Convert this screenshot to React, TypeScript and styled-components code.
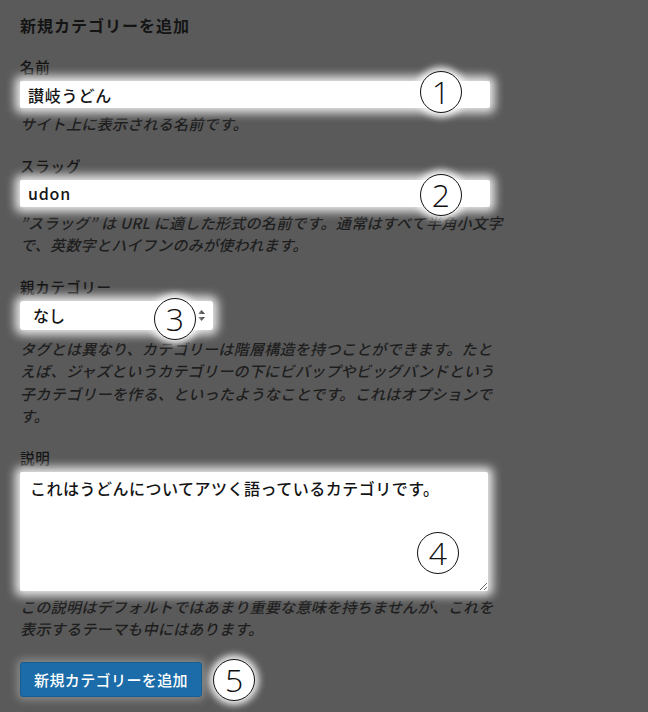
import React from "react";
import styled, { createGlobalStyle } from "styled-components";

const GlobalStyle = createGlobalStyle`
  body {
    margin: 0;
    background: #5a5a5a;
  }
`;

const Page = styled.div`
  min-height: 712px;
  box-sizing: border-box;
  padding: 14px 0 0 20px;
  background: #5a5a5a;
  color: #141414;
  font-family: "Noto Sans CJK JP", "Noto Sans", sans-serif;
`;

const Title = styled.h2`
  margin: 0 0 21px;
  font-size: 16px;
  line-height: 22px;
  font-weight: 700;
  letter-spacing: 1px;
`;

const Field = styled.div`
  margin-bottom: 20px;
`;

const Label = styled.div`
  font-size: 14.5px;
  line-height: 20px;
  font-weight: 500;
  letter-spacing: 0.8px;
  margin-bottom: 4px;
`;

const Control = styled.div<{ $width: number }>`
  position: relative;
  width: ${(p) => p.$width}px;
`;

const glow = `0 0 10px 5px rgba(255, 255, 255, 0.85)`;

const TextInput = styled.input`
  display: block;
  width: 100%;
  height: 27px;
  box-sizing: border-box;
  border: none;
  border-radius: 2px;
  padding: 0 8px;
  background: #fff;
  box-shadow: ${glow};
  font-family: inherit;
  font-size: 16px;
  font-weight: 500;
  letter-spacing: 0.8px;
  color: #141414;
  outline: none;
`;

const SelectBox = styled.div`
  display: flex;
  align-items: center;
  justify-content: space-between;
  height: 29px;
  box-sizing: border-box;
  padding: 0 7px 0 13px;
  border-radius: 3px;
  background: #fff;
  box-shadow: ${glow};
  font-size: 16px;
  font-weight: 500;
  color: #141414;
`;

const TextArea = styled.textarea`
  display: block;
  width: 100%;
  height: 119px;
  box-sizing: border-box;
  border: none;
  border-radius: 2px;
  padding: 6px 10px;
  background: #fff;
  box-shadow: ${glow};
  font-family: inherit;
  font-size: 16px;
  font-weight: 500;
  line-height: 20px;
  letter-spacing: 0.5px;
  color: #141414;
  resize: vertical;
  outline: none;
`;

const Hint = styled.p<{ $gap?: number }>`
  margin: ${(p) => p.$gap ?? 5}px 0 0;
  font-size: 15px;
  line-height: 22.5px;
  font-style: italic;
  font-weight: 500;
  letter-spacing: 0.3px;
  color: #1e1e1e;
  white-space: nowrap;
`;

const Badge = styled.span<{ $x?: number; $y?: number }>`
  position: ${(p) => (p.$x === undefined ? "static" : "absolute")};
  left: ${(p) => p.$x ?? 0}px;
  top: ${(p) => p.$y ?? 0}px;
  display: flex;
  align-items: center;
  justify-content: center;
  width: 42px;
  height: 42px;
  box-sizing: border-box;
  border: 1.5px solid #111;
  border-radius: 50%;
  background: #fff;
  box-shadow: 0 0 7px 4px rgba(255, 255, 255, 0.9);
  font-family: "Open Sans", "Liberation Sans", sans-serif;
  font-weight: 300;
  font-size: 32px;
  line-height: 1;
  color: #111;
`;

const Actions = styled.div`
  display: flex;
  align-items: center;
  gap: 11px;
  margin-top: -2px;
`;

const SubmitButton = styled.button`
  height: 35px;
  padding: 0 13px;
  border: 1px solid #155d92;
  border-radius: 3px;
  background: #1b6ca8;
  box-shadow: 0 0 8px 3px rgba(255, 255, 255, 0.3);
  color: #fff;
  font-family: inherit;
  font-size: 15px;
  font-weight: 500;
  letter-spacing: 0.4px;
`;

const Arrows = () => (
  <svg width="9" height="13" viewBox="0 0 9 13">
    <path d="M4.5 1 L8 5 L1 5 Z" fill="#333" />
    <path d="M4.5 12 L8 8 L1 8 Z" fill="#333" />
  </svg>
);

const App = () => (
  <Page>
    <GlobalStyle />
    <Title>新規カテゴリーを追加</Title>

    <Field>
      <Label>名前</Label>
      <Control $width={470}>
        <TextInput readOnly defaultValue="讃岐うどん" />
        <Badge $x={400} $y={-10}>1</Badge>
      </Control>
      <Hint>サイト上に表示される名前です。</Hint>
    </Field>

    <Field>
      <Label>スラッグ</Label>
      <Control $width={470}>
        <TextInput readOnly defaultValue="udon" />
        <Badge $x={400} $y={-6}>2</Badge>
      </Control>
      <Hint>
        ”スラッグ” は URL に適した形式の名前です。通常はすべて半角小文字
        <br />
        で、英数字とハイフンのみが使われます。
      </Hint>
    </Field>

    <Field>
      <Label>親カテゴリー</Label>
      <Control $width={193}>
        <SelectBox>
          なし
          <Arrows />
        </SelectBox>
        <Badge $x={134} $y={-3}>3</Badge>
      </Control>
      <Hint $gap={8}>
        タグとは異なり、カテゴリーは階層構造を持つことができます。たと
        <br />
        えば、ジャズというカテゴリーの下にビバップやビッグバンドという
        <br />
        子カテゴリーを作る、といったようなことです。これはオプションで
        <br />
        す。
      </Hint>
    </Field>

    <Field>
      <Label>説明</Label>
      <Control $width={468}>
        <TextArea readOnly defaultValue="これはうどんについてアツく語っているカテゴリです。" />
        <Badge $x={397} $y={60}>4</Badge>
      </Control>
      <Hint>
        この説明はデフォルトではあまり重要な意味を持ちませんが、これを
        <br />
        表示するテーマも中にはあります。
      </Hint>
    </Field>

    <Actions>
      <SubmitButton type="button">新規カテゴリーを追加</SubmitButton>
      <Badge>5</Badge>
    </Actions>
  </Page>
);

export default App;
